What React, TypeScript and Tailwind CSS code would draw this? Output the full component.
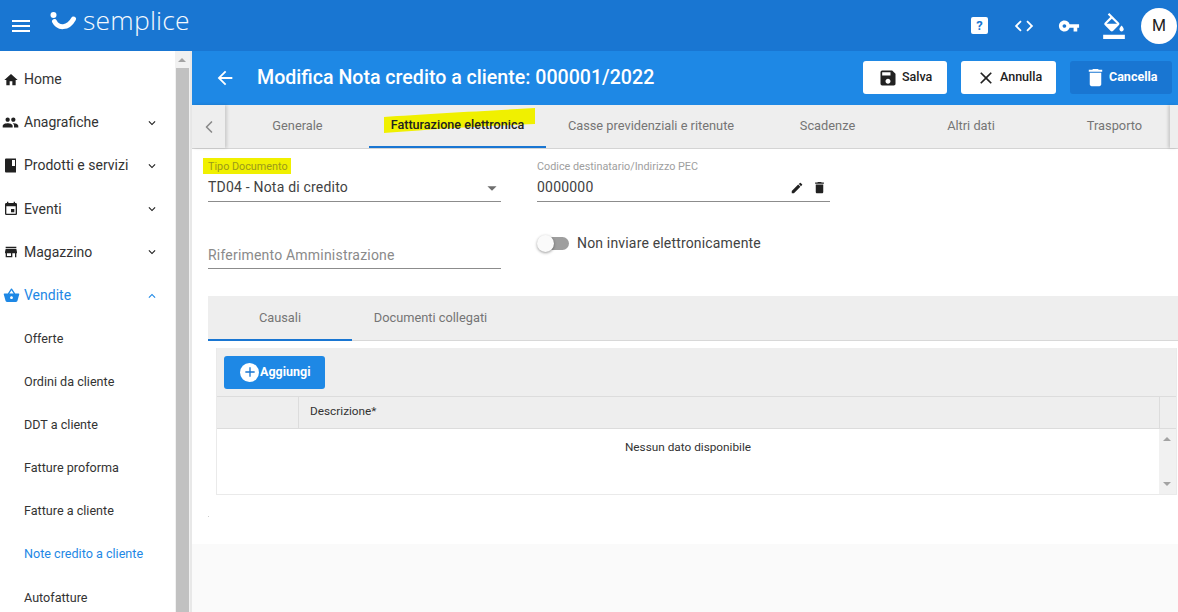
import React from "react";
import {
  MdMenu, MdHome, MdPeople, MdEvent, MdStore, MdShoppingBasket, MdExpandMore, MdExpandLess,
  MdArrowBack, MdSave, MdClose, MdDelete, MdEdit, MdCode, MdVpnKey,
  MdFormatColorFill, MdAdd, MdArrowDropDown,
} from "react-icons/md";
import { ChevronLeft } from "lucide-react";

const ArrowUp = ({ c = "#a3a3a3" }: { c?: string }) => (
  <svg width="8" height="4" viewBox="0 0 8 4"><path d="M0 4 4 0l4 4z" fill={c} /></svg>
);
const ArrowDown = ({ c = "#a3a3a3" }: { c?: string }) => (
  <svg width="8" height="4" viewBox="0 0 8 4"><path d="M0 0h8L4 4z" fill={c} /></svg>
);

const BookIcon = () => (
  <svg width="15" height="15" viewBox="0 0 15 15" className="text-[#212121]">
    <path d="M3 0.5h10v14H3a1 1 0 0 1-1-1v-12a1 1 0 0 1 1-1z" fill="currentColor" />
    <path d="M9 2h3v6H9z" fill="#fff" />
  </svg>
);

const mainItems = [
  { label: "Home", icon: <MdHome size={16} /> },
  { label: "Anagrafiche", icon: <MdPeople size={17} className="-ml-[1px]" />, more: true },
  { label: "Prodotti e servizi", icon: <BookIcon />, more: true },
  { label: "Eventi", icon: <MdEvent size={16} />, more: true },
  { label: "Magazzino", icon: <MdStore size={16} />, more: true },
];
const subItems = ["Offerte", "Ordini da cliente", "DDT a cliente", "Fatture proforma", "Fatture a cliente", "Note credito a cliente", "Autofatture"];

function Sidebar() {
  return (
    <aside className="w-[192px] shrink-0 flex bg-white border-r-2 border-[#e8e8e8] overflow-hidden">
      <nav className="w-[175px] shrink-0 pt-[7px]">
        {mainItems.map((it) => (
          <div key={it.label} className="h-[43.2px] flex items-center text-[14px] text-[#333]">
            <span className="w-[24px] pl-[3px] shrink-0 flex text-[#212121]">{it.icon}</span>
            <span className="flex-1">{it.label}</span>
            {it.more && <MdExpandMore size={14} className="mr-[16px] text-[#212121]" />}
          </div>
        ))}
        <div className="h-[43.6px] flex items-center text-[14px] text-[#1e88e5]">
          <span className="w-[24px] pl-[3px] shrink-0 flex"><MdShoppingBasket size={17} /></span>
          <span className="flex-1">Vendite</span>
          <MdExpandLess size={14} className="mr-[16px]" />
        </div>
        {subItems.map((s) => (
          <div key={s} className={`h-[43.1px] flex items-center pl-[24px] text-[12.6px] ${s === "Autofatture" ? "pt-px" : ""} ${s.startsWith("Note") ? "text-[#1e88e5]" : "text-[#333]"}`}>{s}</div>
        ))}
      </nav>
      <div className="w-[15px] shrink-0 bg-[#f1f1f1] flex flex-col pr-px">
        <div className="h-[17px] flex items-center justify-center"><ArrowUp /></div>
        <div className="flex-1 bg-[#c1c1c1] ml-[1px]" />
      </div>
    </aside>
  );
}

const tabs = [
  { label: "Generale", w: "w-[143px]" },
  { label: "Fatturazione elettronica", w: "w-[177px]", active: true },
  { label: "Casse previdenziali e ritenute", w: "w-[210px]" },
  { label: "Scadenze", w: "w-[143px]" },
  { label: "Altri dati", w: "w-[144px]" },
  { label: "Trasporto", w: "w-[143px]" },
];

function TabStrip() {
  return (
    <div className="h-[44px] shrink-0 flex bg-[#eeeeee] border-b border-[#d4d4d4]">
      <div className="w-[33px] shrink-0 flex items-center justify-center text-[#8a8a8a] shadow-[2px_0_3px_rgba(0,0,0,0.15)] z-10">
        <ChevronLeft size={20} strokeWidth={2} />
      </div>
      <div className="flex-1 flex overflow-hidden pl-px">
        {tabs.map((t) => (
          <div key={t.label} className={`${t.w} shrink-0 relative flex items-center justify-center pb-px ${t.active ? "text-[12.6px] font-medium text-[#212121] border-b-2 border-[#1976d2]" : "text-[12.8px] text-[#757575]"}`}>
            {t.active && (
              <svg className="absolute left-[15px] top-[3px]" width="152" height="26" viewBox="0 0 152 26">
                <path d="M0 9C40 6 100 3 151 0v16C100 18 40 22 0 25z" fill="#f0f000" />
              </svg>
            )}
            <span className="relative">{t.label}</span>
          </div>
        ))}
      </div>
      <div className="w-[8px] shrink-0 shadow-[-2px_0_3px_rgba(0,0,0,0.15)] z-10" />
    </div>
  );
}

function FatturazioneForm() {
  return (
    <div className="flex gap-[36px] h-[147px] pl-[16px]">
      <div className="w-[293px] flex flex-col">
        <div className="mt-[9px] h-[16px] -ml-[5px] w-[88px] bg-[#f0f000] flex items-center pl-[5px] pt-[2px] text-[10.8px] text-[#9a9a1a]">Tipo Documento</div>
        <div className="h-[28px] flex items-center justify-between border-b border-[#8c8c8c] text-[14px] text-[#424242]">
          <span className="tracking-[0.2px]">TD04 - Nota di credito</span>
          <MdArrowDropDown size={22} className="-mr-[2px] text-[#6e6e6e]" />
        </div>
        <div className="mt-[40px] h-[27px] flex items-center border-b border-[#8c8c8c] text-[14px] text-[#8a8a8a] tracking-[0.2px]">Riferimento Amministrazione</div>
      </div>
      <div className="w-[293px] flex flex-col">
        <div className="mt-[9px] h-[16px] flex items-center pt-[2px] text-[10.8px] text-[#9e9e9e]">Codice destinatario/Indirizzo PEC</div>
        <div className="h-[28px] flex items-center justify-between border-b border-[#8c8c8c] text-[14px] text-[#424242]">
          <span className="tracking-[0.2px]">0000000</span>
          <span className="flex items-center gap-[8px] mr-[3px] text-[#212121]"><MdEdit size={14} /><MdDelete size={15} /></span>
        </div>
        <div className="mt-[27px] h-[28px] flex items-center gap-[8px]">
          <span className="relative w-[32px] h-[14px] flex items-center">
            <span className="absolute left-[1px] right-0 h-[13px] rounded-full bg-[#9e9e9e]" />
            <span className="absolute left-0 -top-[1px] w-[17px] h-[17px] rounded-full bg-[#fafafa] shadow-[0_1px_3px_rgba(0,0,0,0.4)]" />
          </span>
          <span className="text-[14px] text-[#424242] tracking-[0.17px]">Non inviare elettronicamente</span>
        </div>
      </div>
    </div>
  );
}

function Causali() {
  return (
    <div className="pl-[16px]">
      <div className="h-[45px] bg-[#eeeeee] border-b border-[#d8d8d8] flex text-[12.8px] text-[#757575]">
        <div className="w-[144px] flex items-center justify-center border-b-2 border-[#1976d2] h-[45px]">Causali</div>
        <div className="w-[157px] flex items-center justify-center">Documenti collegati</div>
      </div>
      <div className="ml-[8px] mr-px mt-[7px] border-x border-b border-[#eaeaea]">
        <div className="h-[48px] bg-[#eeeeee] flex items-center pl-[7px]">
          <div className="w-[101px] h-[33px] rounded-[3px] bg-[#1e88e5] flex items-center pl-[16px] text-white text-[12.5px] font-bold">
            <span className="w-[19px] h-[19px] rounded-full bg-white flex items-center justify-center text-[#1976d2] shrink-0 mr-px"><MdAdd size={16} /></span>
            Aggiungi
          </div>
        </div>
        <div className="h-[33px] bg-[#eeeeee] border-y border-[#dcdcdc] flex items-center text-[11.8px] text-[#333]">
          <div className="w-[82px] h-full border-r border-[#dcdcdc]" />
          <div className="flex-1 pl-[11px] pb-px">Descrizione*</div>
          <div className="w-[17px] h-full border-l border-[#dcdcdc]" />
        </div>
        <div className="h-[65px] flex">
          <div className="flex-1 pt-[10px] text-center text-[11.8px] text-[#333]">Nessun dato disponibile</div>
          <div className="w-[17px] bg-[#f1f1f1] flex flex-col items-center justify-between py-[8px] pr-[2px]">
            <ArrowUp /><ArrowDown />
          </div>
        </div>
      </div>
      <div className="mt-[21px] w-px h-px bg-[#cccccc]" />
    </div>
  );
}

export default function App() {
  return (
    <div className="w-[1178px] h-[612px] overflow-hidden flex flex-col bg-[#fafafa] [font-family:Roboto,'Liberation_Sans',sans-serif]">
      <header className="h-[51px] shrink-0 bg-[#1976d2] flex items-center text-white">
        <MdMenu size={24} className="ml-[9px]" />
        <svg className="ml-[17px] mb-[7px]" width="27" height="20" viewBox="0 0 27 20">
          <circle cx="3.5" cy="3" r="3" fill="#fff" />
          <path d="M4.5 9.5C8 16.5 18 17 23.5 7" fill="none" stroke="#fff" strokeWidth="5" strokeLinecap="round" />
        </svg>
        <span className="ml-[6px] mb-[9px] text-[26.5px] font-light tracking-[0.2px] [font-family:'Open_Sans',sans-serif] text-[#f4f9fe]">semplice</span>
        <div className="flex-1" />
        <span className="w-[17px] h-[17px] rounded-[2px] bg-white text-[#1976d2] flex items-center justify-center text-[13px] font-bold -ml-px">?</span>
        <MdCode size={22} className="ml-[25px]" />
        <MdVpnKey size={22} className="ml-[23px]" />
        <MdFormatColorFill size={26} className="ml-[21px]" />
        <span className="ml-[14px] mr-px w-[36px] h-[36px] rounded-full bg-white text-[#212121] flex items-center justify-center text-[16px]">M</span>
      </header>
      <div className="flex-1 flex min-h-0">
        <Sidebar />
        <main className="flex-1 flex flex-col min-w-0">
          <div className="h-[54px] shrink-0 bg-[#1e88e5] flex items-center text-white">
            <MdArrowBack size={22} className="ml-[22px]" />
            <h1 className="ml-[21px] mb-px text-[19.6px] font-medium">Modifica Nota credito a cliente: 000001/2022</h1>
            <div className="flex-1" />
            <div className="mb-px w-[84px] h-[33px] rounded-[3px] bg-white flex items-center pl-[15px] gap-[4px] text-[12.5px] font-medium text-[#212121]"><MdSave size={20} />Salva</div>
            <div className="mb-px ml-[14px] w-[95px] h-[33px] rounded-[3px] bg-white flex items-center pl-[15px] gap-[4px] text-[12.5px] font-medium text-[#212121]"><MdClose size={20} />Annulla</div>
            <div className="mb-px ml-[14px] mr-[6px] w-[102px] h-[33px] rounded-[3px] bg-[#1976d2] flex items-center pl-[14px] gap-[2px] text-[12.5px] font-bold"><MdDelete size={23} />Cancella</div>
          </div>
          <TabStrip />
          <div className="h-[395px] bg-white">
            <FatturazioneForm />
            <Causali />
          </div>
        </main>
      </div>
    </div>
  );
}
